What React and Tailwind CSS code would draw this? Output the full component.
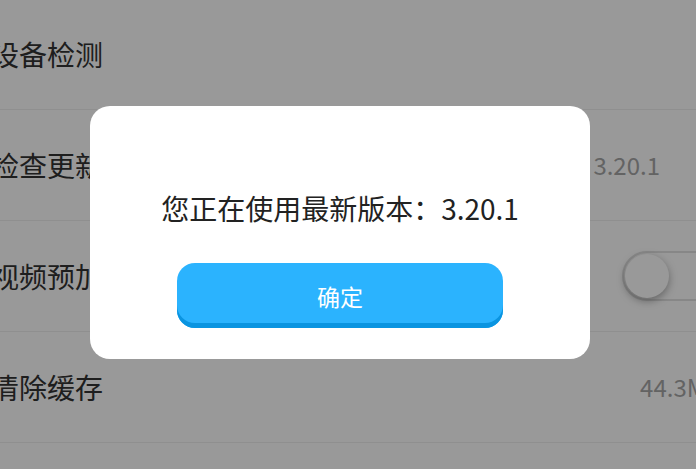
import React, { useState } from "react";

const rows = [
  { label: "设备检测" },
  { label: "检查更新", value: "3.20.1", extra: "mr-[62px]" },
  { label: "视频预加载", toggle: true },
  { label: "清除缓存", value: "44.3MB" },
];

function Toggle({ on }) {
  return (
    <div className="relative w-[100px] h-[50px] rounded-full border-2 border-[#e2e2e2] bg-white">
      <div
        className={
          "absolute top-[1px] left-[1px] w-[44px] h-[44px] rounded-full bg-white shadow-[0_3px_8px_rgba(0,0,0,0.35)]" +
          (on ? " translate-x-[50px]" : "")
        }
      />
    </div>
  );
}

export default function App() {
  const [open, setOpen] = useState(true);

  return (
    <div
      className="relative w-[696px] h-[469px] overflow-hidden bg-white"
      style={{ fontFamily: '"Noto Sans CJK SC", "Noto Sans", sans-serif' }}
    >
      <div className="ml-[-9px] -mt-px w-[731px]">
        {rows.map((row) => (
          <div
            key={row.label}
            className="flex items-center justify-between h-[111px] border-b border-[#eeeeee]"
          >
            <span className="text-[28px] text-[#333333] whitespace-nowrap">{row.label}</span>
            {row.value && (
              <span className={"text-[24px] text-[#a6a6a6] " + (row.extra || "")}>{row.value}</span>
            )}
            {row.toggle && <Toggle on={false} />}
          </div>
        ))}
      </div>

      {open && (
        <div className="fixed inset-0 bg-black/40 flex items-center justify-center pb-[4px] pr-[16px]">
          <div className="w-[500px] h-[253px] bg-white rounded-[20px] flex flex-col items-center pt-[82px]">
            <p className="text-[28px] leading-[40px] text-[#222222] whitespace-nowrap">
              您正在使用最新版本：3.20.1
            </p>
            <button
              onClick={() => setOpen(false)}
              className="mt-[35px] w-[326px] h-[65px] rounded-[18px] bg-[#2bb3fe] shadow-[inset_0_-5px_0_#0a94e0] text-white text-[23px] pt-[2px]"
            >
              确定
            </button>
          </div>
        </div>
      )}
    </div>
  );
}
